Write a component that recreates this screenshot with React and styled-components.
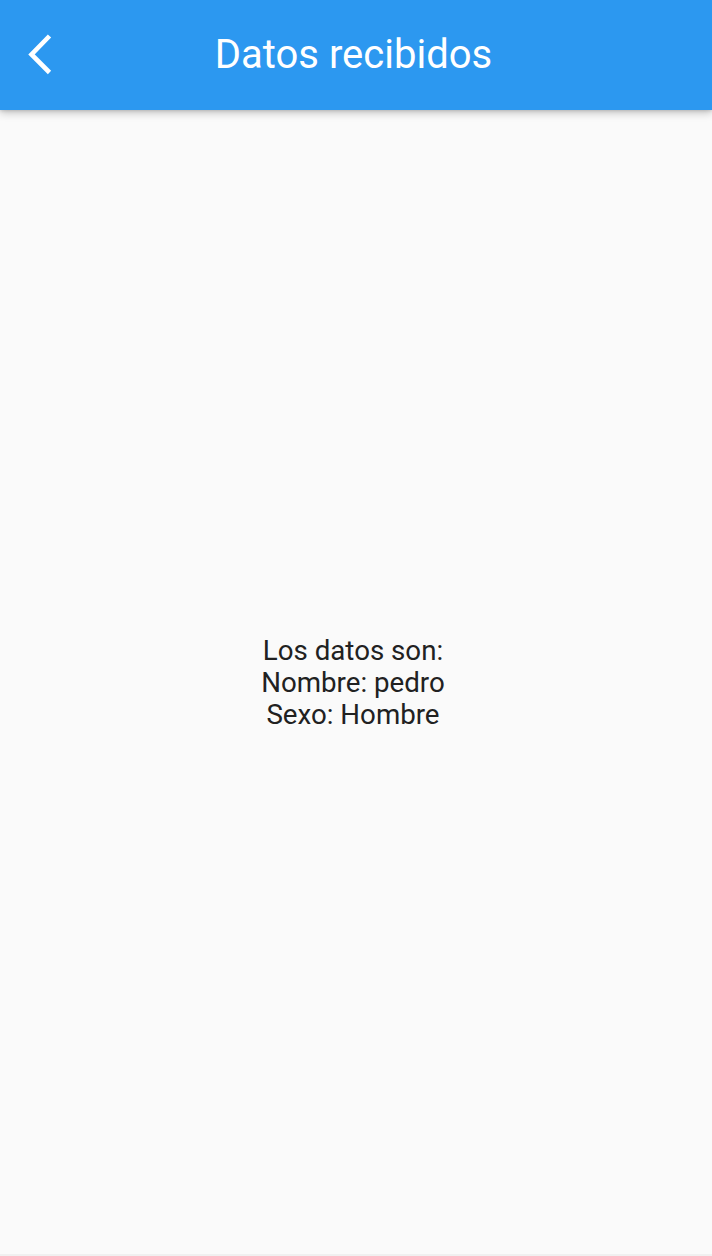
import React from 'react';
import styled, { createGlobalStyle } from 'styled-components';

const GlobalStyle = createGlobalStyle`
  html, body {
    margin: 0;
    padding: 0;
    background: #fafafa;
  }
  * {
    box-sizing: border-box;
  }
`;

const Screen = styled.div`
  display: flex;
  flex-direction: column;
  height: 1256px;
  background: #fafafa;
  font-family: Roboto, 'Noto Sans', sans-serif;
  border-bottom: 2px solid #f0f0f0;
`;

const AppBar = styled.header`
  display: grid;
  grid-template-columns: 98px 1fr 98px;
  align-items: center;
  height: 110px;
  flex-shrink: 0;
  background: #2c98f0;
  color: #fff;
  box-shadow: 0 3px 8px rgba(0, 0, 0, 0.22), 0 1px 3px rgba(0, 0, 0, 0.12);
  position: relative;
  z-index: 1;
`;

const BackButton = styled.button`
  display: flex;
  align-items: center;
  justify-content: flex-start;
  padding: 0 0 0 24px;
  height: 100%;
  background: none;
  border: none;
  color: inherit;
  cursor: pointer;
`;

const Title = styled.h1`
  margin: 0 0 0 -5px;
  text-align: center;
  font-size: 40px;
  font-weight: 400;
  line-height: 1;
`;

const Body = styled.main`
  flex: 1;
  display: flex;
  align-items: center;
  justify-content: center;
  padding: 2px 6px 0 0;
`;

const Message = styled.p`
  margin: 0;
  text-align: center;
  font-size: 27.7px;
  line-height: 32px;
  color: #212121;
`;

const BackIcon = () => (
  <svg width="32" height="48" viewBox="0 0 32 48" aria-hidden="true">
    <polyline
      points="25.5,5 7.5,23.5 25.5,41.5"
      fill="none"
      stroke="currentColor"
      strokeWidth="4.6"
    />
  </svg>
);

const App = () => (
  <>
    <GlobalStyle />
    <Screen>
      <AppBar>
        <BackButton aria-label="Volver">
          <BackIcon />
        </BackButton>
        <Title>Datos recibidos</Title>
        <span />
      </AppBar>
      <Body>
        <Message>
          Los datos son:
          <br />
          Nombre: pedro
          <br />
          Sexo: Hombre
        </Message>
      </Body>
    </Screen>
  </>
);

export default App;
